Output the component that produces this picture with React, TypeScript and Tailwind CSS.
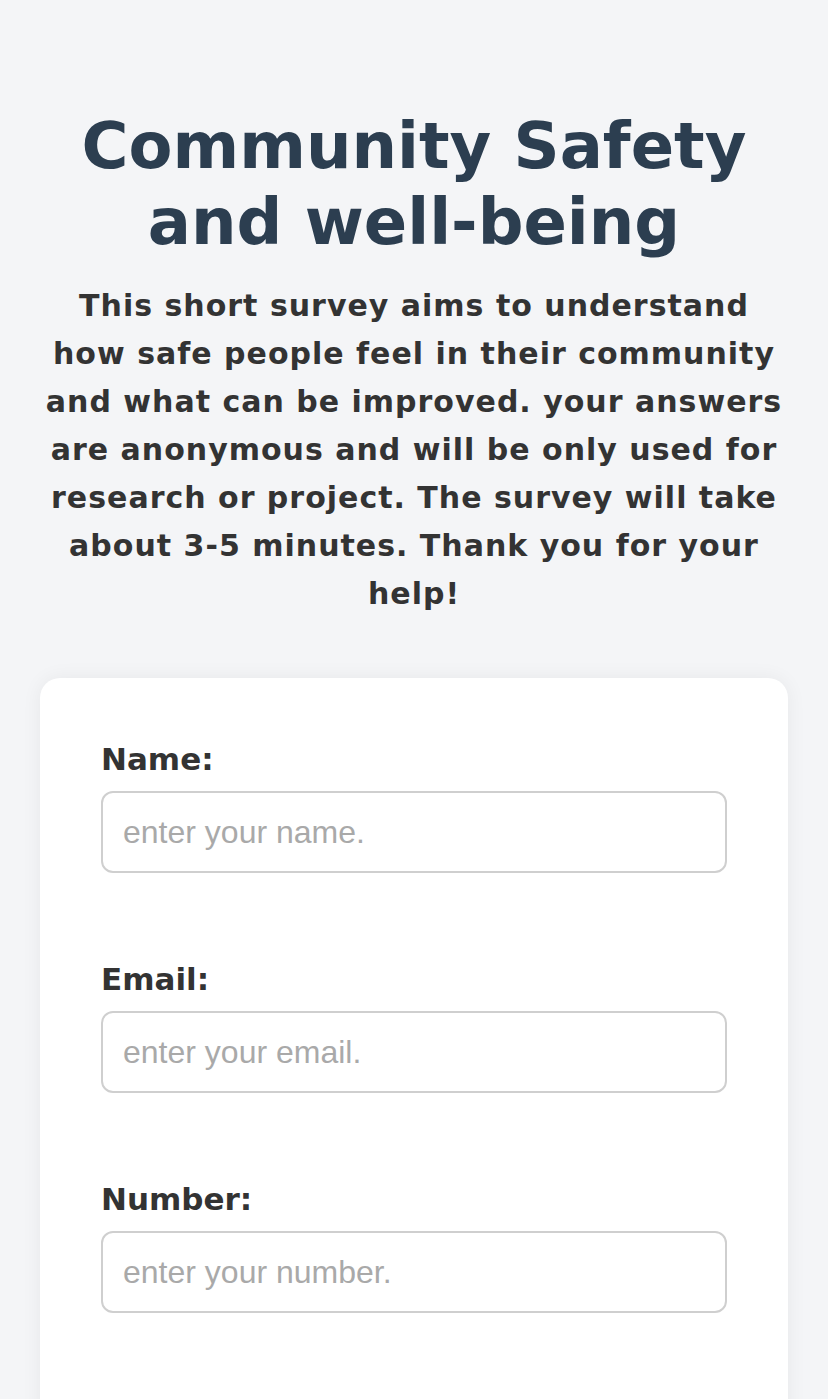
export default function App() {
  const fields = [
    { label: "Name:", placeholder: "enter your name.", type: "text" },
    { label: "Email:", placeholder: "enter your email.", type: "email" },
    { label: "Number:", placeholder: "enter your number.", type: "tel" },
  ];

  const intro = [
    "This short survey aims to understand",
    "how safe people feel in their community",
    "and what can be improved. your answers",
    "are anonymous and will be only used for",
    "research or project. The survey will take",
    "about 3-5 minutes. Thank you for your",
    "help!",
  ];

  return (
    <div className="min-h-[1399px] bg-[#f4f5f7] px-10 pt-[108px] font-['DejaVu_Sans',sans-serif]">
      {/* Header */}
      <h1 className="text-center text-[64px] leading-[76px] font-bold text-[#2c3e50]">
        Community Safety and well-being
      </h1>
      <p className="-mx-3 mt-[22px] text-center text-[30px] leading-[48px] font-bold tracking-[1px] whitespace-nowrap text-[#333]">
        {intro.map((line, i) => (
          <span key={i} className="block">
            {line}
          </span>
        ))}
      </p>

      {/* Form card */}
      <div className="mt-[60px] rounded-[20px] bg-white px-[61px] pt-[62px] pb-10 shadow-[0_0_20px_rgba(0,0,0,0.06)]">
        {fields.map((f) => (
          <div key={f.label} className="mb-[87px]">
            <label className="block text-[31px] leading-[38px] font-bold text-[#333]">{f.label}</label>
            <input
              type={f.type}
              placeholder={f.placeholder}
              className="mt-[13px] block h-[82px] w-full rounded-[12px] border-2 border-[#cfcfcf] bg-white px-5 font-['Liberation_Sans',sans-serif] text-[32px] text-[#333] placeholder:text-[#a9a9a9] outline-none"
            />
          </div>
        ))}
      </div>
    </div>
  );
}
